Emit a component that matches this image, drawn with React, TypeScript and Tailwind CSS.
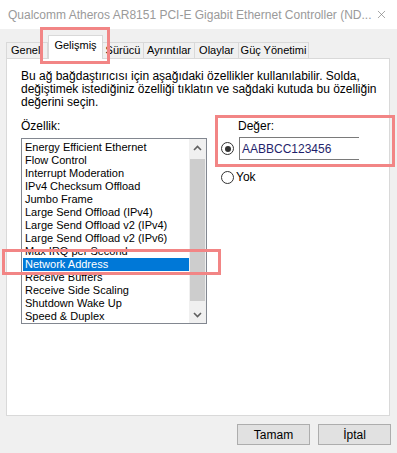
import { X } from 'lucide-react'

const tabs = [
  { label: 'Genel', w: 'w-[42px]' },
  { label: 'Gelişmiş', w: 'w-[55px]', active: true },
  { label: 'Sürücü', w: 'w-[42px]' },
  { label: 'Ayrıntılar', w: 'w-[52px]' },
  { label: 'Olaylar', w: 'w-[45px]' },
  { label: 'Güç Yönetimi', w: 'w-[71px]' },
]

const properties = [
  'Energy Efficient Ethernet',
  'Flow Control',
  'Interrupt Moderation',
  'IPv4 Checksum Offload',
  'Jumbo Frame',
  'Large Send Offload (IPv4)',
  'Large Send Offload v2 (IPv4)',
  'Large Send Offload v2 (IPv6)',
  'Max IRQ per Second',
  'Network Address',
  'Receive Buffers',
  'Receive Side Scaling',
  'Shutdown Wake Up',
  'Speed & Duplex',
]

function Radio({ checked }: { checked?: boolean }) {
  return (
    <span className="flex h-[13px] w-[13px] shrink-0 items-center justify-center rounded-full border border-[#333] bg-white">
      {checked && <span className="h-[6px] w-[6px] rounded-full bg-[#333]" />}
    </span>
  )
}

export default function App() {
  return (
    <div className="relative h-[453px] w-[397px] overflow-hidden bg-[#f0f0f0] font-['Liberation_Sans',sans-serif] text-[12px] text-black">
      {/* Title bar */}
      <div className="flex h-[29px] items-center justify-between bg-white pl-[8px] pr-[9px]">
        <span className="whitespace-nowrap text-[12px] text-[#9a9a9a]">
          Qualcomm Atheros AR8151 PCI-E Gigabit Ethernet Controller (ND...
        </span>
        <X className="h-[13px] w-[13px] text-[#777]" strokeWidth={1.2} />
      </div>

      {/* Tabs */}
      <div className="flex h-[29px] items-end pl-[6px] text-[11px]">
        {tabs.map((tab) =>
          tab.active ? (
            <div
              key={tab.label}
              className={`relative z-10 -mb-px flex h-[24px] ${tab.w} items-start justify-center whitespace-nowrap border border-b-0 border-[#d9d9d9] bg-white pt-[4px] leading-none`}
            >
              {tab.label}
            </div>
          ) : (
            <div
              key={tab.label}
              className={`-ml-px flex h-[16px] ${tab.w} items-center justify-center whitespace-nowrap border border-b-0 border-[#d9d9d9] leading-none first:ml-0 first:justify-start first:pl-[4px]`}
            >
              {tab.label}
            </div>
          )
        )}
      </div>

      {/* Panel */}
      <div className="mx-[6px] h-[358px] w-[384px] border border-[#d9d9d9] bg-white px-[14px] pt-[11px]">
        <p className="whitespace-nowrap leading-[13px]">
          Bu ağ bağdaştırıcısı için aşağıdaki özellikler kullanılabilir. Solda,
          <br />
          değiştimek istediğiniz özelliği tıklatın ve sağdaki kutuda bu özelliğin
          <br />
          değerini seçin.
        </p>

        <div className="mt-[11px] flex">
          {/* Property list */}
          <div className="flex flex-col">
            <span className="leading-[13px]">Özellik:</span>
            <div className="mt-[5px] flex h-[186px] w-[186px] border border-[#828790]">
              <ul className="flex-1 pl-[1px] pt-[2px] text-[11px]">
                {properties.map((p) => (
                  <li
                    key={p}
                    className={`h-[13px] whitespace-nowrap pl-[2px] leading-[13px] ${
                      p === 'Network Address' ? 'bg-[#0078d7] text-white' : ''
                    }`}
                  >
                    {p}
                  </li>
                ))}
              </ul>
              <div className="flex w-[17px] flex-col bg-[#f0f0f0]">
                <div className="flex h-[17px] items-center justify-center">
                  <svg width="9" height="6" viewBox="0 0 9 6">
                    <path d="M1 5 L4.5 1.5 L8 5" fill="none" stroke="#606060" strokeWidth="1.6" />
                  </svg>
                </div>
                <div className="mx-[1px] mt-[3px] h-[142px] bg-[#cdcdcd]" />
                <div className="mt-auto flex h-[17px] items-center justify-center">
                  <svg width="9" height="6" viewBox="0 0 9 6">
                    <path d="M1 1 L4.5 4.5 L8 1" fill="none" stroke="#606060" strokeWidth="1.6" />
                  </svg>
                </div>
              </div>
            </div>
          </div>

          {/* Value */}
          <div className="ml-[14px] flex flex-col">
            <span className="pl-[17px] leading-[13px]">Değer:</span>
            <div className="mt-[4px] flex items-center gap-[5px]">
              <Radio checked />
              <div className="flex h-[23px] w-[120px] items-center border border-r-0 border-[#7a7a7a] pl-[2px] text-[#1f1f6b]">
                AABBCC123456
              </div>
            </div>
            <div className="mt-[11px] flex h-[13px] items-center gap-[2px]">
              <Radio />
              <span className="leading-[13px]">Yok</span>
            </div>
          </div>
        </div>
      </div>

      {/* Buttons */}
      <div className="mt-[8px] flex justify-end gap-[8px] pr-[6px]">
        <button className="h-[21px] w-[73px] border border-[#adadad] bg-[#e1e1e1]">Tamam</button>
        <button className="h-[21px] w-[73px] border border-[#adadad] bg-[#e1e1e1]">İptal</button>
      </div>

      {/* Highlight boxes */}
      <div className="absolute left-[40px] top-[27px] h-[37px] w-[70px] border-[3px] border-[#f28585]" />
      <div className="absolute left-[215px] top-[115px] h-[52px] w-[180px] border-[3px] border-[#f28585]" />
      <div className="absolute left-[2px] top-[249px] h-[26px] w-[219px] border-[3px] border-[#f28585]" />
    </div>
  )
}
